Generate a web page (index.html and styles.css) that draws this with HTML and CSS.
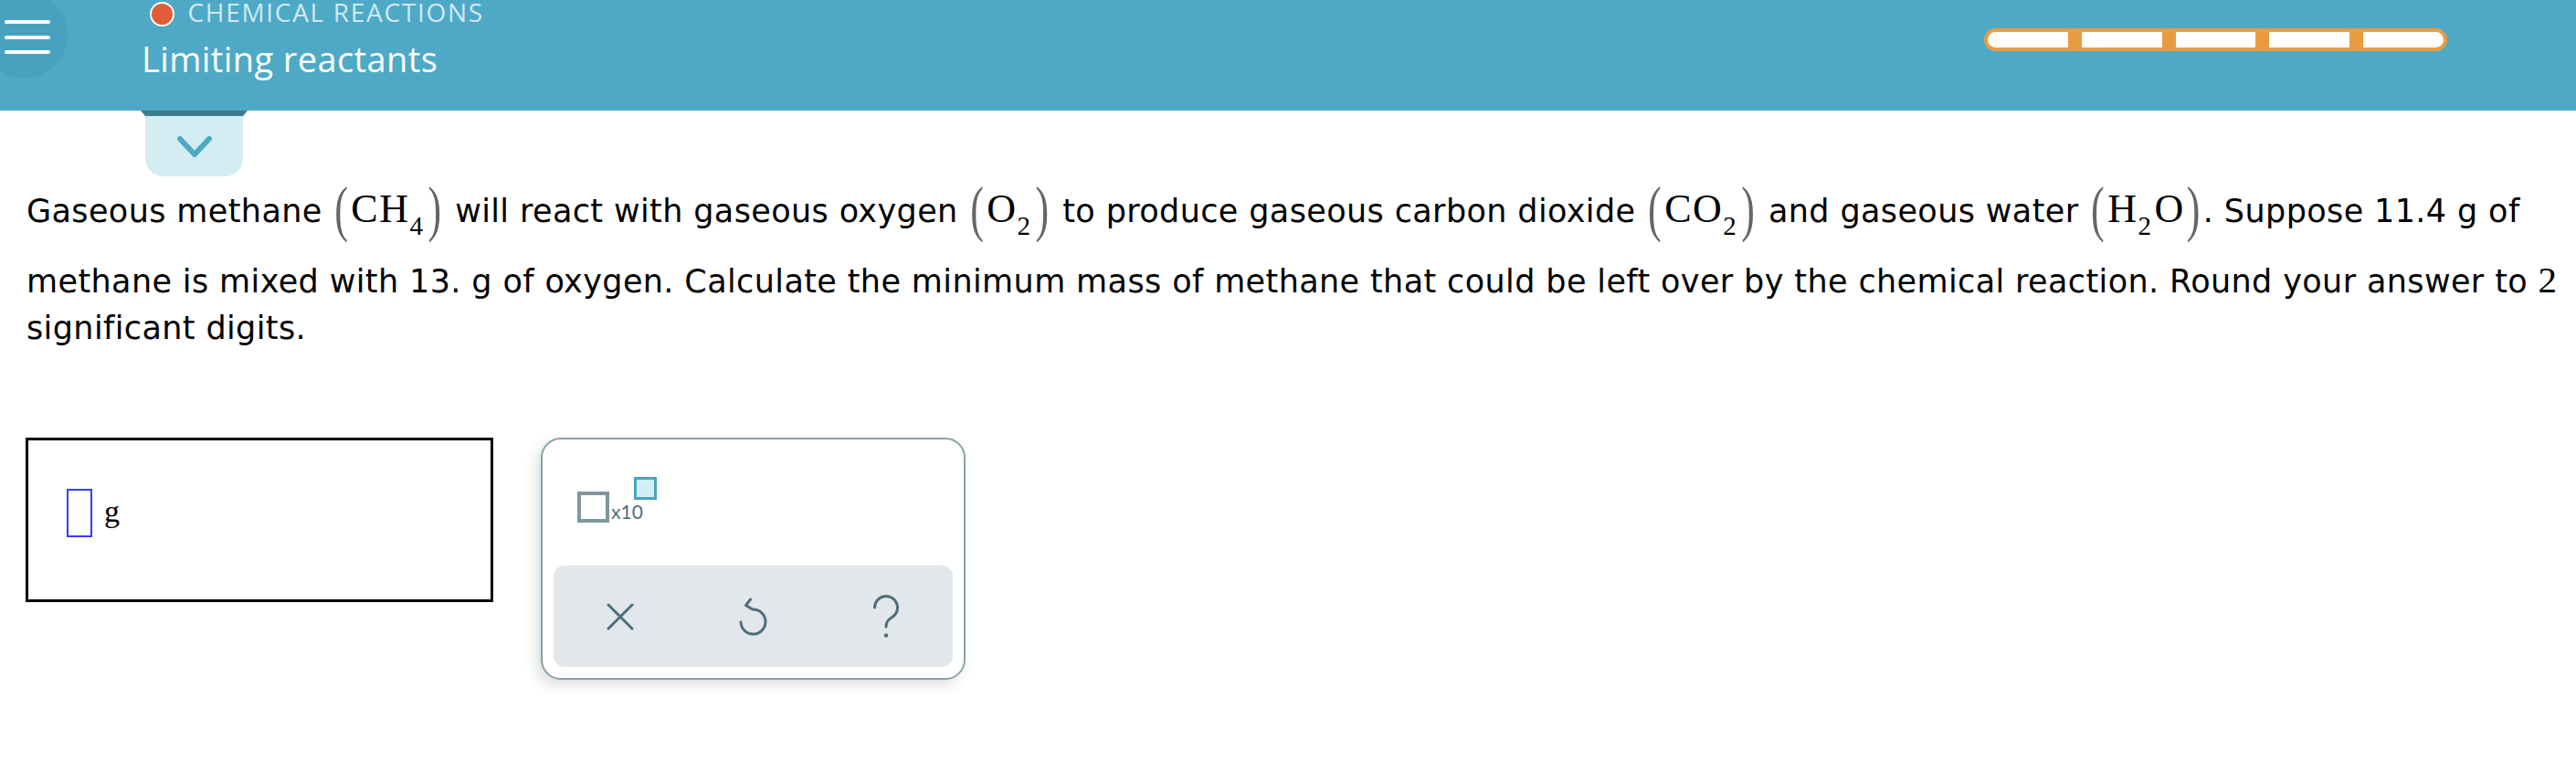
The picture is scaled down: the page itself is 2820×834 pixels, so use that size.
FILE: index.html
```html
<!DOCTYPE html>
<html lang="en">
<head>
<meta charset="utf-8">
<title>Limiting reactants</title>
<link rel="stylesheet" href="styles.css">
</head>
<body>
<header class="header">
  <div class="menu">
    <span class="menu-line"></span>
    <span class="menu-line"></span>
    <span class="menu-line"></span>
  </div>
  <div class="title">
    <div class="topic-row">
      <span class="topic-dot"></span>
      <span class="topic">CHEMICAL REACTIONS</span>
    </div>
    <div class="lesson">Limiting reactants</div>
  </div>
  <div class="progress">
    <span class="seg"></span>
    <span class="seg"></span>
    <span class="seg"></span>
    <span class="seg"></span>
    <span class="seg"></span>
  </div>
</header>

<div class="tab">
  <div class="tab-top"></div>
  <div class="tab-body">
    <svg class="chev" width="40" height="25" viewBox="0 0 40 25"><path d="M4 4 L20 21 L36 4" fill="none" stroke="#4ea9c6" stroke-width="6" stroke-linecap="round" stroke-linejoin="round"/></svg>
  </div>
</div>

<p class="question">Gaseous methane <span class="m"><span class="par">(</span>CH<sub>4</sub><span class="par">)</span></span> will react with gaseous oxygen <span class="m"><span class="par">(</span>O<sub>2</sub><span class="par">)</span></span> to produce gaseous carbon dioxide <span class="m"><span class="par">(</span>CO<sub>2</sub><span class="par">)</span></span> and gaseous water <span class="m"><span class="par">(</span>H<sub>2</sub>O<span class="par">)</span></span>. Suppose 11.4 g of methane is mixed with 13. g of oxygen. Calculate the minimum mass of methane that could be left over by the chemical reaction. Round your answer to <span class="mn">2</span> significant digits.</p>

<div class="work">
  <div class="answer">
    <span class="cursor"></span>
    <span class="unit">g</span>
  </div>
  <div class="panel">
    <div class="sci">
      <span class="sq-big"></span>
      <span class="x10">x10</span>
      <span class="sq-small"></span>
    </div>
    <div class="keys">
      <div class="key">
        <svg width="30" height="30" viewBox="0 0 30 30"><path d="M2 2 L28 28 M28 2 L2 28" fill="none" stroke="#4f6e7b" stroke-width="3" stroke-linecap="round"/></svg>
      </div>
      <div class="key">
        <svg width="34" height="42" viewBox="0 0 34 42"><path d="M4 27 A13.5 13.5 0 1 0 17 13 L9.5 8.5 L14.5 2" fill="none" stroke="#4f6e7b" stroke-width="3" stroke-linecap="round" stroke-linejoin="round"/></svg>
      </div>
      <div class="key">
        <svg width="32" height="48" viewBox="0 0 32 48"><path d="M3.5 14 A12.5 12.5 0 1 1 22 25 C17.5 27.5 16 30 16 35" fill="none" stroke="#4f6e7b" stroke-width="3" stroke-linecap="round"/><circle cx="16" cy="44.5" r="2.3" fill="#4f6e7b"/></svg>
      </div>
    </div>
  </div>
</div>
</body>
</html>
```
FILE: styles.css
```css
html, body {
  margin: 0;
  padding: 0;
  background: #ffffff;
}
body {
  width: 2820px;
  height: 834px;
  overflow: hidden;
}

/* ---------- header ---------- */
.header {
  display: flex;
  align-items: flex-start;
  height: 121px;
  background: #4ea9c6;
  overflow: hidden;
}
.menu {
  flex: none;
  width: 96px;
  height: 96px;
  margin: -10px 0 0 -22px;
  border-radius: 50%;
  background: #48a2bf;
  box-sizing: border-box;
  padding: 32px 0 0 27px;
  display: flex;
  flex-direction: column;
  gap: 12.5px;
}
.menu-line {
  display: block;
  width: 50px;
  height: 4px;
  border-radius: 2px;
  background: #ffffff;
}
.title {
  margin-left: 81px;
  font-family: "Open Sans", "Lato", sans-serif;
}
.topic-row {
  display: flex;
  align-items: flex-start;
}
.topic-dot {
  flex: none;
  width: 23px;
  height: 23px;
  margin: 2px 0 0 8.5px;
  border: 2px solid #ffffff;
  border-radius: 50%;
  background: #e35d38;
}
.topic {
  margin-left: 15px;
  font-size: 28px;
  line-height: 26px;
  color: #cdeaf2;
  letter-spacing: 1.7px;
}
.lesson {
  margin-top: 13.3px;
  font-size: 38px;
  line-height: 44px;
  color: #ffffff;
  letter-spacing: 0.4px;
}
.progress {
  margin: 31px 141px 0 auto;
  width: 507px;
  height: 25px;
  box-sizing: border-box;
  padding: 4px;
  background: #e99b41;
  border-radius: 13px;
  display: flex;
  gap: 15px;
}
.seg {
  flex: 1;
  background: #ffffff;
}
.seg:first-child { border-radius: 9px 0 0 9px; }
.seg:last-child { border-radius: 0 9px 9px 0; }

/* ---------- tab ---------- */
.tab {
  margin-left: 154px;
  width: 117px;
}
.tab-top {
  height: 6px;
  background: #3b7d8f;
  clip-path: polygon(0 0, 100% 0, calc(100% - 5px) 100%, 5px 100%);
}
.tab-body {
  margin: 0 5px;
  height: 66px;
  background: #d4edf3;
  border-radius: 0 0 20px 20px;
  display: flex;
  align-items: center;
  justify-content: center;
}
.chev { display: block; }

/* ---------- question ---------- */
.question {
  margin: 13.4px 0 0;
  padding: 0 0 0 29px;
  font-family: "DejaVu Sans", Verdana, sans-serif;
  font-size: 35px;
  line-height: 51px;
  letter-spacing: 0.38px;
  color: #000000;
}
.m {
  display: inline-block;
  font-family: "Liberation Serif", "Times New Roman", serif;
  font-size: 44px;
  line-height: 42px;
  letter-spacing: 1.5px;
  padding-bottom: 31px;
}
.m sub {
  font-size: 29px;
  line-height: 0;
  vertical-align: -14px;
  margin-right: 2px;
}
.par {
  display: inline-block;
  color: #666666;
  transform: scaleY(1.55);
  margin: 0 2px;
}
.mn {
  font-family: "Liberation Serif", "Times New Roman", serif;
  font-size: 41px;
}

/* ---------- work area ---------- */
.work {
  display: flex;
  align-items: flex-start;
  gap: 52px;
  margin-top: 94px;
  padding-left: 28px;
}
.answer {
  width: 512px;
  height: 180px;
  box-sizing: border-box;
  border: 3px solid #000000;
  padding: 53px 0 0 42px;
  display: flex;
  align-items: flex-start;
}
.cursor {
  flex: none;
  width: 28px;
  height: 53px;
  box-sizing: border-box;
  border: 2px solid #3a3aff;
}
.unit {
  margin: 7.5px 0 0 13px;
  font-family: "Liberation Serif", "Times New Roman", serif;
  font-size: 34px;
  line-height: 34px;
  color: #000000;
}
.panel {
  width: 465px;
  height: 265px;
  box-sizing: border-box;
  border: 2px solid #8aa0a8;
  border-radius: 22px;
  background: #ffffff;
  box-shadow: -5px 6px 14px rgba(40, 60, 70, 0.16);
}
.sci {
  height: 138px;
  box-sizing: border-box;
  padding: 41px 0 0 38px;
  display: flex;
  align-items: flex-start;
  font-family: "Lato", "Open Sans", sans-serif;
}
.sq-big {
  flex: none;
  width: 35px;
  height: 34px;
  box-sizing: border-box;
  margin-top: 16px;
  border: 4px solid #7f969e;
}
.x10 {
  margin: 28px 0 0 2px;
  font-size: 21px;
  line-height: 20px;
  color: #4f6e7b;
}
.sq-small {
  flex: none;
  width: 25px;
  height: 25px;
  box-sizing: border-box;
  margin-left: -10px;
  border: 3px solid #4aa3c0;
  background: #d4eef5;
}
.keys {
  margin: 0 12px;
  height: 111px;
  border-radius: 12px;
  background: #e1e7ea;
  display: grid;
  grid-template-columns: 1fr 1fr 1fr;
  align-items: center;
  justify-items: center;
}
.key svg { display: block; }
```
